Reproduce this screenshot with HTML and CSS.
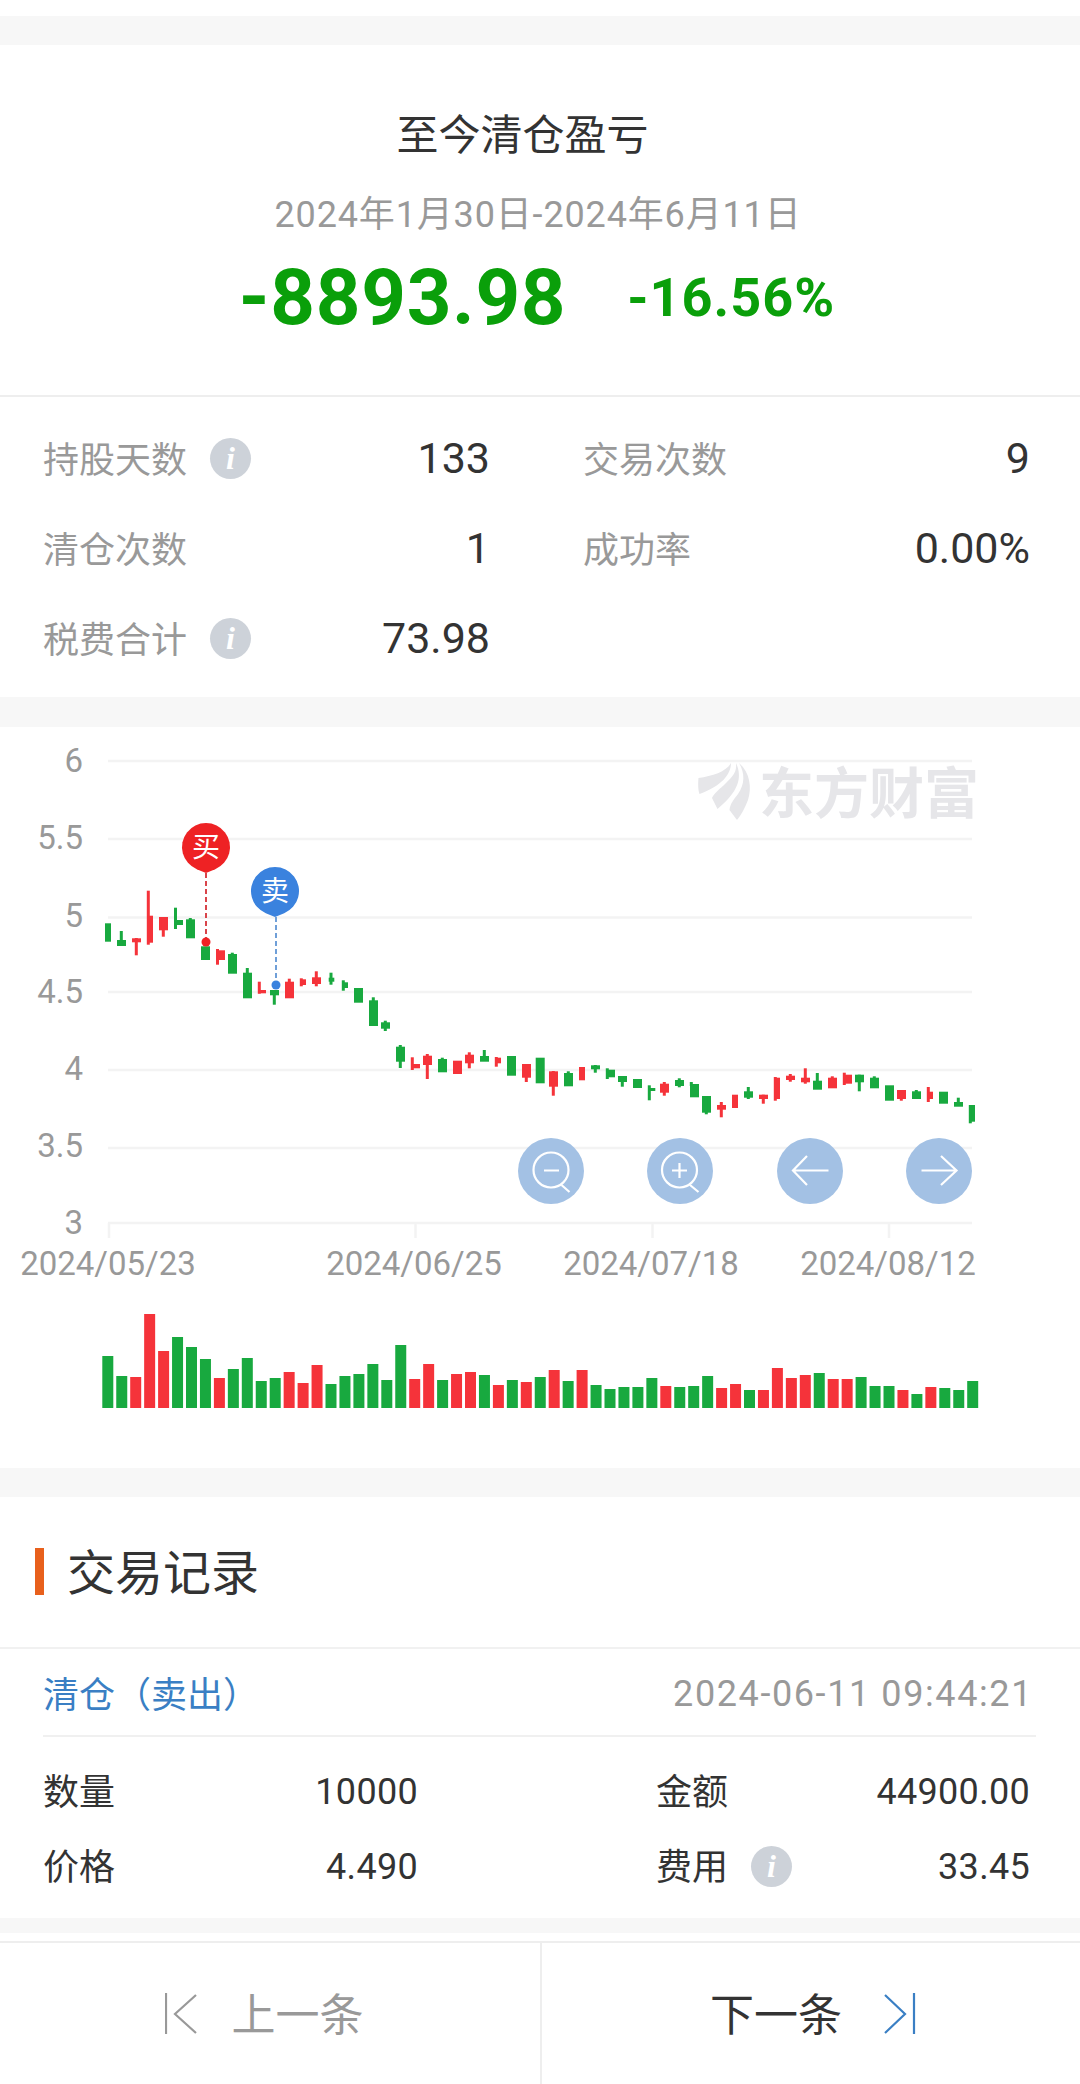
FILE: index.html
```html
<!DOCTYPE html>
<html lang="zh-CN">
<head>
<meta charset="utf-8">
<title>至今清仓盈亏</title>
<link rel="stylesheet" href="styles.css">
</head>
<body>
<div class="spacer-top"></div>
<div class="band band-top"></div>

<section class="summary">
  <h1 class="summary-title">至今清仓盈亏</h1>
  <p class="summary-date">2024年1月30日-2024年6月11日</p>
  <div class="summary-figures">
    <span class="loss-amount">-8893.98</span>
    <span class="loss-rate">-16.56%</span>
  </div>
</section>

<section class="stats">
  <div class="stat"><span class="stat-label">持股天数</span><i class="info">i</i><span class="stat-value">133</span></div>
  <div class="stat"><span class="stat-label">交易次数</span><span class="stat-value">9</span></div>
  <div class="stat"><span class="stat-label">清仓次数</span><span class="stat-value">1</span></div>
  <div class="stat"><span class="stat-label">成功率</span><span class="stat-value">0.00%</span></div>
  <div class="stat"><span class="stat-label">税费合计</span><i class="info">i</i><span class="stat-value">73.98</span></div>
</section>

<div class="band band-chart-top"></div>

<svg class="chart" viewBox="0 727 1080 741" width="1080" height="741" xmlns="http://www.w3.org/2000/svg">
  <g class="grid">
    <path d="M108 761H972M108 839H972M108 917.5H972M108 992H972M108 1070H972M108 1148H972M108 1223H972"/>
    <path d="M109 1223V1238M415.5 1223V1238M652.5 1223V1238M889 1223V1238"/>
  </g>
  <g class="watermark">
    <path d="M698.5 778C712 776 726 772 731 763C731 774 722 786 699.5 794C698 790 698 783 698.5 778Z"/>
    <path d="M736 763C743 778 738 792 717.5 809L712 798C714 793 720 789 726 783C733 776 737 772 736 763Z"/>
    <path d="M739 763C750 772 752 788 748 800C745 808 741 815 737 820L729.5 810C730 804 734 799 738 794C745 784 745 773 739 763Z"/>
    <text class="watermark-text" x="759" y="813">东方财富</text>
  </g>
  <g class="axis-y">
    <text x="83" y="772">6</text>
    <text x="83" y="849">5.5</text>
    <text x="83" y="927">5</text>
    <text x="83" y="1003">4.5</text>
    <text x="83" y="1080">4</text>
    <text x="83" y="1157">3.5</text>
    <text x="83" y="1234">3</text>
  </g>
  <g class="axis-x">
    <text x="108" y="1275">2024/05/23</text>
    <text x="414" y="1275">2024/06/25</text>
    <text x="651" y="1275">2024/07/18</text>
    <text x="888" y="1275">2024/08/12</text>
  </g>
  <g id="candles"></g>
  <g id="volumes"></g>

  <path class="leader leader-buy" d="M206 873V938"/>
  <circle class="fill-buy" cx="206" cy="942" r="4.5"/>
  <path class="fill-buy" d="M206 873L196.800 869.200A24 24 0 1 1 215.200 869.200Z"/>
  <text class="pin-text" x="206" y="857">买</text>

  <path class="leader leader-sell" d="M276 917V981"/>
  <circle class="fill-sell" cx="276" cy="985" r="4.5"/>
  <path class="fill-sell" d="M275 917L265.800 913.200A24 24 0 1 1 284.200 913.200Z"/>
  <text class="pin-text" x="275" y="901">卖</text>

  <circle class="btn-bg" cx="551" cy="1171" r="33"/>
  <circle class="btn-bg" cx="680" cy="1171" r="33"/>
  <circle class="btn-bg" cx="810" cy="1171" r="33"/>
  <circle class="btn-bg" cx="939" cy="1171" r="33"/>
  <g class="btn-icon">
    <circle cx="551" cy="1170" r="17.5"/>
    <path d="M561.5 1185L569.5 1192M544 1170.5H559"/>
    <circle cx="679.5" cy="1170" r="17.5"/>
    <path d="M690 1185L698.5 1192M672 1170.5H687M679.5 1163V1178"/>
    <path d="M828.5 1170.5H793M807 1156L793 1170.5L807 1185"/>
    <path d="M921.5 1170.5H956.5M941 1156L956.5 1170.5L941 1185"/>
  </g>
</svg>

<div class="band band-mid"></div>

<header class="section-head">
  <span class="section-mark"></span>
  <h2 class="section-title">交易记录</h2>
</header>

<section class="record">
  <div class="record-head">
    <span class="record-type">清仓（卖出）</span>
    <span class="record-time">2024-06-11 09:44:21</span>
  </div>
  <div class="record-body">
    <div class="cell"><span class="cell-label">数量</span><span class="cell-value">10000</span></div>
    <div class="cell"><span class="cell-label">金额</span><span class="cell-value">44900.00</span></div>
    <div class="cell"><span class="cell-label">价格</span><span class="cell-value">4.490</span></div>
    <div class="cell"><span class="cell-label">费用</span><i class="info">i</i><span class="cell-value">33.45</span></div>
  </div>
</section>

<div class="band band-low"></div>

<footer class="pager">
  <div class="pager-btn pager-prev">
    <svg class="pager-icon" width="32" height="42" viewBox="0 0 32 42" xmlns="http://www.w3.org/2000/svg"><path d="M1 0V41M31 2L10 21L31 40"/></svg>
    <span>上一条</span>
  </div>
  <div class="pager-btn pager-next">
    <span>下一条</span>
    <svg class="pager-icon" width="32" height="42" viewBox="0 0 32 42" xmlns="http://www.w3.org/2000/svg"><path d="M1 2L21 21L1 40M30 0V41"/></svg>
  </div>
</footer>
<script src="script.js"></script>
</body>
</html>
```

FILE: styles.css
```css
* { box-sizing: border-box; }
html, body { margin: 0; padding: 0; background: #fff; }
body {
  width: 1080px;
  height: 2084px;
  overflow: hidden;
  font-family: Roboto, "Noto Sans CJK SC", sans-serif;
  color: #333;
}
h1, h2, p { margin: 0; font-weight: 400; }

.spacer-top { height: 16px; }
.band { background: #f7f7f7; }
.band-top { height: 29px; }
.band-chart-top { height: 30px; }
.band-mid { height: 29px; }
.band-low { height: 15px; margin-bottom: 8px; }

.summary {
  height: 352px;
  border-bottom: 2px solid #eee;
  display: flex;
  flex-direction: column;
  align-items: center;
  padding-top: 62px;
}
.summary-title { font-size: 42px; line-height: 58px; color: #333; margin-right: 35px; }
.summary-date { margin-top: 26px; margin-right: 4px; font-size: 36px; line-height: 48px; color: #999; letter-spacing: .85px; }
.summary-figures { display: flex; align-items: center; margin-top: 22px; margin-right: 6px; height: 74px; color: #0a9f0a; font-weight: 700; }
.loss-amount { font-size: 78px; line-height: 74px; letter-spacing: .7px; }
.loss-rate { font-size: 54px; line-height: 74px; margin-left: 61px; letter-spacing: 1px; }

.stats {
  height: 300px;
  padding: 16px 50px 0 43px;
  display: grid;
  grid-template-columns: 447px 447px;
  grid-auto-rows: 90px;
  column-gap: 93px;
}
.stat { display: flex; align-items: center; font-size: 36px; }
.stat-label { color: #999; margin-bottom: 2px; }
.stat-value { margin-left: auto; font-size: 43px; color: #333; }
.info {
  width: 41px;
  height: 41px;
  margin-left: 23px;
  border-radius: 50%;
  background: #cdd2d9;
  color: #fff;
  font: italic 700 32px/41px "Liberation Serif", serif;
  text-align: center;
}

.chart { display: block; }
.grid path { fill: none; stroke: #f3f3f3; stroke-width: 2.5; }
.watermark path { fill: #e6e6e9; }
.watermark-text { font-family: "Noto Sans CJK SC", sans-serif; font-weight: 700; font-size: 55px; fill: #e6e6e9; }
.axis-y text { font-size: 33px; fill: #999; text-anchor: end; }
.axis-x text { font-size: 33px; fill: #999; text-anchor: middle; }
.fill-buy { fill: #ee2224; }
.fill-sell { fill: #3a82de; }
.leader { fill: none; stroke-width: 2; stroke-dasharray: 5 3; }
.leader-buy { stroke: #d9444a; }
.leader-sell { stroke: #6f9fd8; }
.pin-text { font-family: "Noto Sans CJK SC", sans-serif; font-size: 28px; font-weight: 400; fill: #fff; text-anchor: middle; }
.btn-bg { fill: #a3c1e4; }
.btn-icon circle, .btn-icon path { fill: none; stroke: #fff; stroke-width: 2.2; }
.c-g { fill: #18a93f; }
.c-r { fill: #f5333a; }

.section-head {
  height: 152px;
  border-bottom: 2px solid #f1f1f1;
  display: flex;
  align-items: center;
  padding: 0 0 0 35px;
}
.section-mark { width: 9px; height: 47px; background: #e8601c; margin-top: -1px; }
.section-title { margin-left: 23px; margin-top: 3px; font-size: 48px; line-height: 60px; color: #333; }

.record-head {
  height: 88px;
  margin: 0 44px 0 43px;
  border-bottom: 2px solid #f0f0f0;
  display: flex;
  align-items: center;
  justify-content: space-between;
  font-size: 36px;
  padding-top: 3px;
}
.record-type { color: #3a7fc4; margin-bottom: 3px; }
.record-time { color: #999; padding-right: 3px; letter-spacing: 1.6px; }
.record-body {
  display: grid;
  grid-template-columns: 375px 374px;
  grid-auto-rows: 75px;
  column-gap: 238px;
  padding: 17px 50px 0 43px;
  height: 181px;
}
.cell { display: flex; align-items: center; font-size: 36px; color: #333; }
.cell-label { margin-bottom: 5px; }
.cell-value { margin-left: auto; letter-spacing: .3px; }

.pager {
  height: 143px;
  border-top: 2px solid #eee;
  display: flex;
}
.pager-btn { flex: 1 1 0; display: flex; align-items: center; justify-content: center; font-size: 44px; }
.pager-btn span { margin-bottom: 4px; }
.pager-prev { color: #999; border-right: 2px solid #eee; padding-right: 12px; gap: 35px; flex-basis: 542px; }
.pager-next { color: #333; gap: 42px; flex-basis: 538px; padding-left: 4px; }
.pager-icon { fill: none; stroke-width: 2.2; }
.pager-prev .pager-icon { stroke: #999; }
.pager-next .pager-icon { stroke: #3a7fc4; }
```

FILE: script.js
```js
// x0, x1, body top, body bottom, wick x, wick top, wick bottom, colour
var candles = [
  [105,111,923.3,941.7,0,0,0,'g'],[117,126,940,946,121.3,931,946,'g'],[132,141,938.3,942.3,136.3,938,955.3,'r'],
  [147,153,915.7,942.7,148.3,890.7,944.7,'r'],[159,168,917,930.3,163.3,917,936.7,'r'],[174,183,920,925,175.5,907.7,929,'g'],
  [186,195,919.3,938.3,190.3,918,938,'g'],[201,210,946.3,960,0,0,0,'g'],[216,225,950.3,960,217.5,949,964.7,'r'],
  [228,237,954,973.7,232.3,952.7,973,'g'],[243,252,972.7,998.3,247.3,968,973,'g'],[258,266,990,993.3,259.3,981.7,993.7,'r'],
  [270,279,990,995.3,274.3,990,1004.7,'g'],[285,294,981.7,998.3,289.3,978.7,982,'r'],[300,306,979.3,985,301.3,978.3,986.3,'r'],
  [312,321,977.3,984,316.3,971.3,986.3,'r'],[328.7,334.3,977.7,981.7,331,972.7,984.7,'g'],[342,348,982.3,988,343.3,980.3,990.7,'g'],
  [354,363,988,1002.7,0,0,0,'g'],[369,378,1000.3,1026,373.3,997.3,1001,'g'],[381,390,1022.3,1028.7,385.3,1020.7,1031,'g'],
  [396,405,1046.7,1061.7,400.3,1045,1068,'g'],[411,420,1064,1068.3,412.3,1057.3,1070,'r'],[423,432,1055.7,1065,427.3,1054,1079,'r'],
  [438,447,1059,1072.3,442.3,1057.7,1060,'g'],[453,462,1060.7,1074,0,0,0,'r'],[465,474,1054.7,1063.3,469.3,1052.3,1068.3,'r'],
  [480,489,1056,1061.7,484.3,1050,1057,'g'],[495,501,1057.7,1063.3,496.3,1057,1066.7,'r'],[507,516,1056,1075.7,0,0,0,'g'],
  [522,531,1064,1077.7,526.3,1064,1082,'r'],[535.7,544.7,1057.7,1083.3,0,0,0,'g'],[549,558,1071.3,1086.7,553.3,1071,1095.7,'r'],
  [564,573,1073,1086.3,568.3,1071.3,1074,'g'],[579,585,1067,1080.3,0,0,0,'r'],[591,600,1065.3,1069.3,595.3,1065,1072.7,'g'],
  [606,615,1069.7,1077.3,607.3,1068.3,1079,'g'],[618,627,1076,1082,622.3,1076,1086.7,'g'],[633,642,1079,1088,0,0,0,'g'],
  [648,655.3,1088,1091,649.3,1085.3,1100.3,'g'],[660,669,1083.7,1092.7,664.3,1082,1095.7,'r'],[675,684,1080,1086,679.3,1078.3,1087.3,'g'],
  [690,699,1084,1097.3,691.3,1082,1086,'g'],[702,711,1096,1112.7,706.3,1096,1114.3,'g'],[717,726,1105,1109.7,721.3,1102,1117.3,'r'],
  [732,738,1094.7,1108,0,0,0,'r'],[744,753,1091.3,1097.7,748.3,1087,1099,'g'],[759,768,1094.7,1099,763.3,1094.7,1103.7,'r'],
  [774,780,1077.7,1099,775.3,1077,1100.7,'r'],[786,795,1075.7,1080,790.3,1074,1081.7,'r'],[801,810,1077.7,1082.3,805.3,1068.3,1083.7,'r'],
  [813,822,1080.7,1089.7,817.3,1073,1081,'g'],[828,837,1077.7,1088.3,832.3,1076.3,1078,'r'],[843,852,1074.7,1083.7,844.3,1072.7,1085,'r'],
  [855,864,1074.7,1082.3,859.3,1074.7,1091.3,'g'],[870,879,1077.7,1088.3,874.3,1076.3,1078,'g'],[885,894,1085.3,1100.7,0,0,0,'g'],
  [897,906,1090,1099,901.3,1090,1100.7,'r'],[912,921,1091.3,1099,916.3,1090,1092,'g'],[927,933,1091.7,1099,928.3,1087,1102,'r'],
  [939,948,1091.7,1103.7,0,0,0,'g'],[954,963,1102,1106.7,958.3,1097.7,1103,'g'],[969,975,1105,1121.7,970.3,1105,1123.3,'g']
];
var volumes = [
  [52,'g'],[32,'g'],[31,'r'],[94,'r'],[57,'r'],[71,'g'],[61,'g'],[49,'g'],[30,'r'],[39,'g'],[50,'g'],[27,'g'],[30,'g'],
  [36,'r'],[25,'r'],[43,'r'],[24,'g'],[32,'g'],[34,'g'],[44,'g'],[28,'g'],[63,'g'],[29,'r'],[44,'r'],[28,'g'],[34,'r'],
  [36,'r'],[33,'g'],[23,'r'],[28,'g'],[26,'r'],[31,'g'],[38,'r'],[27,'g'],[38,'r'],[23,'g'],[19,'g'],[21,'g'],[21,'g'],
  [30,'g'],[22,'r'],[21,'g'],[22,'g'],[32,'g'],[20,'r'],[24,'r'],[18,'g'],[18,'r'],[40,'r'],[30,'r'],[33,'r'],[35,'g'],
  [29,'r'],[29,'r'],[31,'g'],[22,'g'],[22,'g'],[18,'r'],[14,'g'],[21,'r'],[20,'g'],[18,'g'],[27,'g']
];
var NS = 'http://www.w3.org/2000/svg';
function rect(parent, x, y, w, h, colour) {
  var r = document.createElementNS(NS, 'rect');
  r.setAttribute('x', x);
  r.setAttribute('y', y);
  r.setAttribute('width', w);
  r.setAttribute('height', h);
  r.setAttribute('class', 'c-' + colour);
  parent.appendChild(r);
}
var candleLayer = document.getElementById('candles');
candles.forEach(function (c) {
  rect(candleLayer, c[0], c[2], c[1] - c[0], c[3] - c[2], c[7]);
  if (c[4]) rect(candleLayer, c[4] - 1.5, c[5], 3, c[6] - c[5], c[7]);
});
var volumeLayer = document.getElementById('volumes');
volumes.forEach(function (v, i) {
  rect(volumeLayer, 102.3 + 13.95 * i, 1408 - v[0], 11, v[0], v[1]);
});
```
